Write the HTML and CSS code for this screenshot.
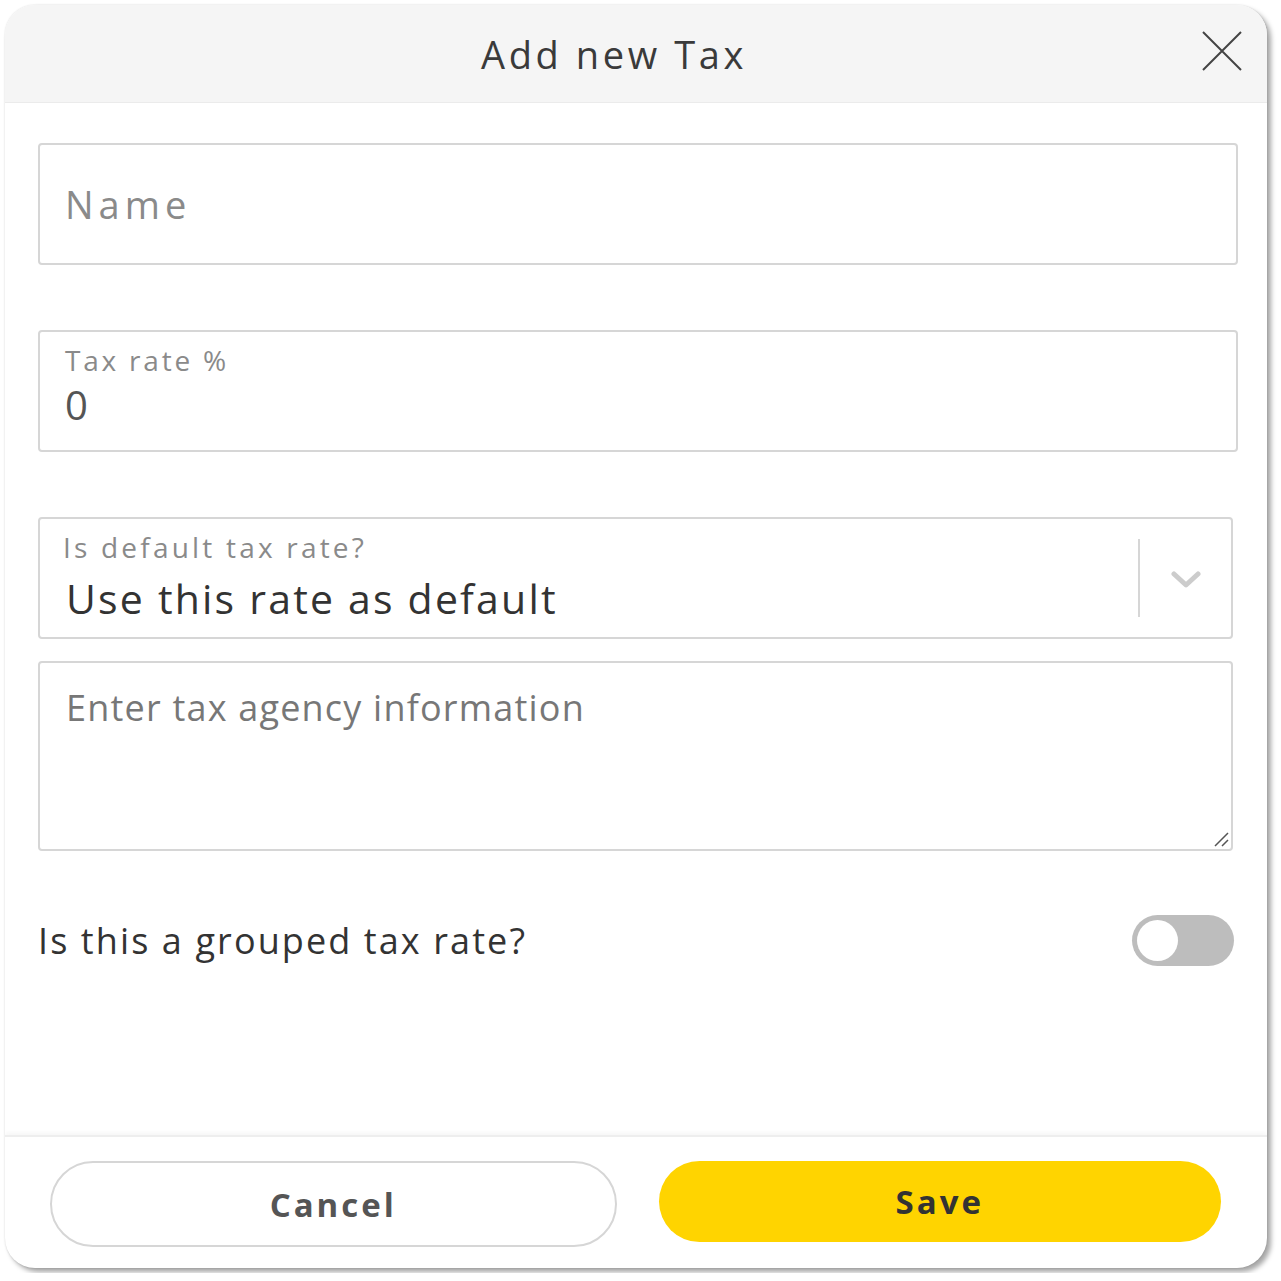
FILE: index.html
```html
<!doctype html>
<html lang="en">
<head>
    <meta charset="UTF-8">
    <title>Add new Tax</title>
    <link rel="stylesheet" href="styles.css">
</head>
<body>
    <div class="modal">
        <div class="modal-head">
            <h1 class="title">Add new Tax</h1>
            <span class="close">
                <svg width="42" height="42" viewBox="0 0 42 42"><path d="M2 2L40 40M40 2L2 40" stroke="#444" stroke-width="2" fill="none"/></svg>
            </span>
        </div>
        <div class="modal-body">
            <div class="field field-name">
                <span class="placeholder">Name</span>
            </div>
            <div class="field field-rate">
                <span class="label">Tax rate %</span>
                <span class="value">0</span>
            </div>
            <div class="field field-select">
                <div class="select-text">
                    <span class="label">Is default tax rate?</span>
                    <span class="value value-big">Use this rate as default</span>
                </div>
                <span class="sep"></span>
                <span class="chevron">
                    <svg width="30" height="18" viewBox="0 0 30 18"><path d="M3 3L15 14L27 3" stroke="#ccc" stroke-width="5" fill="none" stroke-linecap="round" stroke-linejoin="round"/></svg>
                </span>
            </div>
            <div class="field field-area">
                <span class="placeholder">Enter tax agency information</span>
                <span class="grip">
                    <svg width="16" height="16" viewBox="0 0 16 16"><path d="M15 2L2 15M15 9L9 15" stroke="#555" stroke-width="1.5"/></svg>
                </span>
            </div>
            <div class="toggle-row">
                <span class="toggle-label">Is this a grouped tax rate?</span>
                <span class="toggle"><span class="knob"></span></span>
            </div>
        </div>
        <div class="modal-foot">
            <button class="btn btn-cancel">Cancel</button>
            <button class="btn btn-save">Save</button>
        </div>
    </div>
</body>
</html>
```

FILE: styles.css
```css
* {
    margin: 0;
    padding: 0;
    box-sizing: border-box;
}
body{
    background: #fff;
    padding: 5px;
    font-family: "Open Sans", "Noto Sans", sans-serif;
}
.modal{
    width: 1262px;
    height: 1263px;
    border-radius: 30px;
    background: #fff;
    box-shadow: 0 0 2px rgba(0,0,0,0.15), 4px 4px 5px rgba(0,0,0,0.35);
    overflow: hidden;
    display: flex;
    flex-direction: column;
}
.modal-head{
    height: 98px;
    background: #f5f5f5;
    border-bottom: 1px solid #ebebeb;
    display: flex;
    align-items: center;
    justify-content: center;
    padding-right: 44px;
    position: relative;
}
.title{
    font-size: 38px;
    font-weight: 400;
    color: #3a3a3a;
    letter-spacing: 3.6px;
}
.close{
    position: absolute;
    right: 24px;
    top: 25px;
    line-height: 0;
}
.modal-body{
    flex: 1;
    padding: 40px 29px 0 33px;
}
.field{
    border: 2px solid #d6d6d6;
    border-radius: 4px;
    height: 122px;
    position: relative;
}
.field-name{
    display: flex;
    align-items: center;
    padding-left: 25px;
}
.placeholder{
    font-size: 38px;
    color: #8a8a8a;
    letter-spacing: 5px;
}
.field-rate{
    margin-top: 65px;
    padding: 9px 25px 0;
    display: flex;
    flex-direction: column;
}
.label{
    font-size: 28px;
    color: #8a8a8a;
    letter-spacing: 2.8px;
}
.value{
    font-size: 40px;
    color: #555;
    line-height: 1.3;
}
.field-select{
    margin-top: 65px;
    margin-right: 5px;
    display: flex;
    align-items: center;
    padding: 0 30px 0 23px;
}
.select-text{
    flex: 1;
    display: flex;
    flex-direction: column;
    margin-top: 1px;
}
.field-select .label{
    letter-spacing: 3.2px;
    line-height: 1.2;
}
.value-big{
    font-size: 41px;
    color: #333;
    letter-spacing: 2.2px;
    padding-left: 3px;
    margin-top: 7px;
    line-height: 1.35;
}
.sep{
    width: 2px;
    height: 78px;
    background: #d6d6d6;
    margin-right: 31px;
}
.chevron{
    line-height: 0;
    margin-top: 4px;
}
.field-area{
    margin-top: 22px;
    margin-right: 5px;
    height: 190px;
    padding: 20px 26px 0;
}
.field-area .placeholder{
    font-size: 36px;
    color: #777;
    letter-spacing: 1.2px;
}
.grip{
    position: absolute;
    right: 2px;
    bottom: 2px;
    line-height: 0;
}
.toggle-row{
    margin-top: 64px;
    margin-right: 4px;
    display: flex;
    align-items: center;
    justify-content: space-between;
}
.toggle-label{
    font-size: 36px;
    color: #333;
    letter-spacing: 2.1px;
}
.toggle{
    width: 102px;
    height: 51px;
    border-radius: 26px;
    background: #bdbdbd;
    display: flex;
    align-items: center;
    padding-left: 5px;
}
.knob{
    width: 41px;
    height: 41px;
    border-radius: 50%;
    background: #fff;
}
.modal-foot{
    height: 133px;
    border-top: 2px solid #eee;
    box-shadow: 0 -3px 4px rgba(0,0,0,0.03);
    display: flex;
    gap: 42px;
    padding: 24px 46px 0 45px;
}
.btn{
    flex: 1;
    height: 86px;
    border-radius: 43px;
    font-family: "Open Sans", "Noto Sans", sans-serif;
    font-size: 33px;
    font-weight: 700;
    letter-spacing: 3px;
}
.btn-cancel{
    background: #fff;
    border: 2px solid #d6d6d6;
    color: #555;
}
.btn-save{
    background: #ffd400;
    border: 0;
    height: 81px;
    color: #333;
}
```
